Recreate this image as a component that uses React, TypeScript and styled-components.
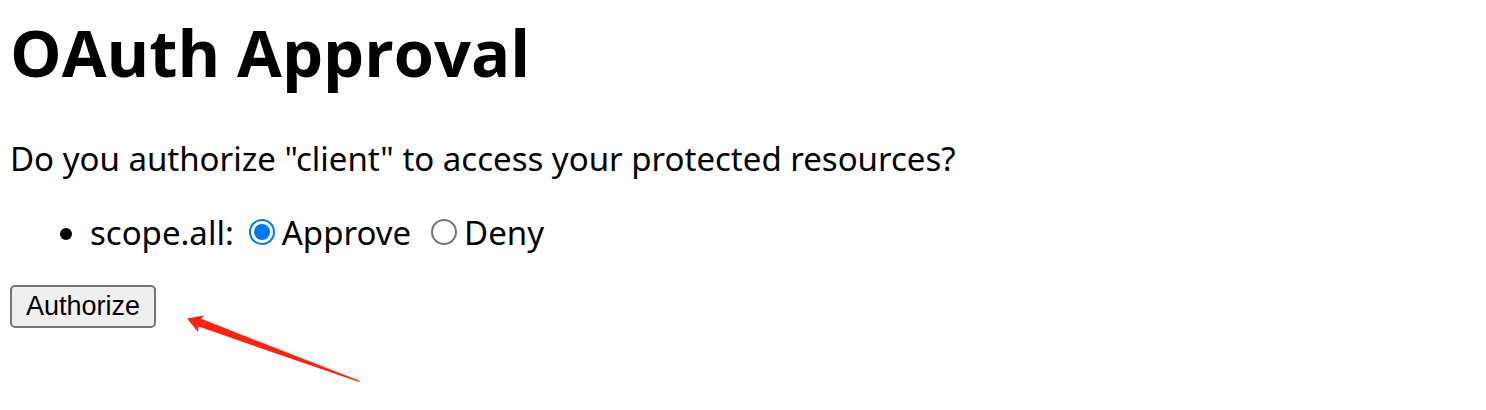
import React from "react";
import styled, { createGlobalStyle } from "styled-components";

const GlobalStyle = createGlobalStyle`
  body {
    margin: 0;
    background: #ffffff;
    color: #000000;
    font-family: "Noto Sans", sans-serif;
    font-size: 33px;
    line-height: 44px;
  }
`;

const Page = styled.main`
  padding: 8px 10px;
`;

const Title = styled.h1`
  margin: 0;
  font-family: "Open Sans", "Noto Sans", sans-serif;
  font-size: 65px;
  line-height: 88px;
  font-weight: 700;
`;

const Question = styled.p`
  margin: 41px 0 0;
`;

const ScopeList = styled.ul`
  margin: 30px 0 0;
  padding: 0 0 0 80px;
`;

const ScopeRow = styled.div`
  display: flex;
  align-items: center;
`;

const ScopeName = styled.span`
  margin-right: 15px;
`;

const Choice = styled.label`
  display: flex;
  align-items: center;
  gap: 7px;
  margin-right: 20px;
`;

const Radio = styled.input`
  appearance: none;
  box-sizing: border-box;
  width: 26px;
  height: 26px;
  margin: 0 0 2px;
  border: 2px solid #767676;
  border-radius: 50%;
  background: #ffffff;

  &:checked {
    border-color: #0075ff;
    background: #0075ff content-box;
    padding: 3px;
  }
`;

const Actions = styled.div`
  display: flex;
  align-items: flex-start;
  gap: 31px;
  margin-top: 30px;
`;

const AuthorizeButton = styled.button`
  box-sizing: border-box;
  height: 43px;
  padding: 0 14px 2px;
  border: 2px solid #767676;
  border-radius: 5px;
  background: #efefef;
  color: #000000;
  font-family: "Liberation Sans", Arial, sans-serif;
  font-size: 27px;
  line-height: 36px;
`;

const Arrow = styled.svg`
  margin-top: 28px;
`;

export default function App() {
  return (
    <>
      <GlobalStyle />
      <Page>
        <Title>OAuth Approval</Title>
        <Question>Do you authorize "client" to access your protected resources?</Question>
        <form onSubmit={(event) => event.preventDefault()}>
          <ScopeList>
            <li>
              <ScopeRow>
                <ScopeName>scope.all:</ScopeName>
                <Choice>
                  <Radio type="radio" name="scope.all" value="true" defaultChecked />
                  Approve
                </Choice>
                <Choice>
                  <Radio type="radio" name="scope.all" value="false" />
                  Deny
                </Choice>
              </ScopeRow>
            </li>
          </ScopeList>
          <Actions>
            <AuthorizeButton type="submit">Authorize</AuthorizeButton>
            <Arrow width="176" height="70" viewBox="0 0 176 70" aria-hidden="true">
              <path
                d="M0 5.5L17 2.6L14 5.8L73 29L173 68L172 69L73 35L11.5 13.5L11 19Z"
                fill="#ff2210"
              />
            </Arrow>
          </Actions>
        </form>
      </Page>
    </>
  );
}
